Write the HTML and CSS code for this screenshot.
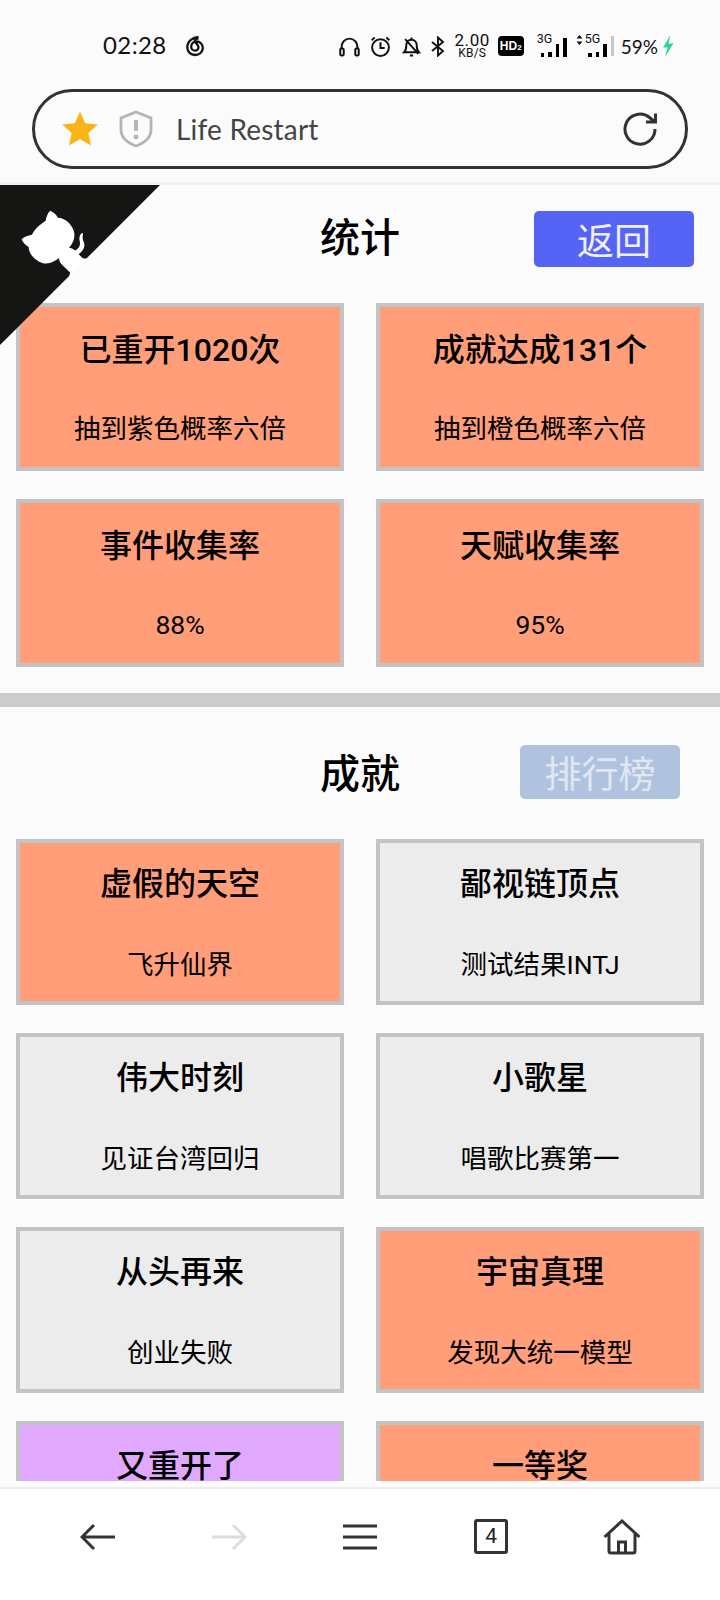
FILE: index.html
```html
<!DOCTYPE html>
<html lang="zh-CN">
<head>
    <meta charset="UTF-8" />
    <meta name="viewport" content="width=device-width, initial-scale=1" />
    <title>Life Restart</title>
    <link rel="stylesheet" href="styles.css">
</head>
<body>
    <div class="phone">
        <div class="status-bar">
            <div class="status-left">
                <span class="time">02:28</span>
                <svg class="ic-netease" viewBox="0 0 20 22"><path d="M13.500 1.800 C8 2.200 2.300 6 2.300 12.300 C2.300 17 5.800 20 10 20 C14.500 20 17.800 17 17.800 13 C17.800 9 14.800 6.500 11.500 6.500 C8.300 6.500 6.200 9 6.200 11.700 C6.200 14 8 15.700 10 15.700 C12 15.700 13.500 14.200 13.500 12.300 C13.500 9.500 10.300 8.500 9.800 6 C9.400 4 11 3.300 13.500 3.800" /></svg>
            </div>
            <div class="status-right">
                <svg class="ic" viewBox="0 0 20 20"><path d="M2.500 14 V10 A7.500 7.500 0 0 1 17.500 10 V14" /><rect x="1.200" y="12" width="3.300" height="6.500" rx="1.200" /><rect x="15.500" y="12" width="3.300" height="6.500" rx="1.200" /></svg>
                <svg class="ic" viewBox="0 0 20 20"><circle cx="10" cy="11" r="8" /><path d="M10 6 V11.500 H14 M1.500 4 L4.500 1.500 M18.500 4 L15.500 1.500" /></svg>
                <svg class="ic ic-bell" viewBox="0 0 20 20"><path d="M3 15.500 C5 13.500 5 11 5 9 C5 6 7 3.500 10 3.500 C13 3.500 15 6 15 9 C15 11 15 13.500 17 15.500 Z M8.500 18.500 H11.500 M10 1.500 V3.500 M4 3 L16.500 17" /></svg>
                <svg class="ic ic-bt" viewBox="0 0 16 20"><path d="M2 5.500 L13 14.500 L8 19 V1 L13 5.500 L2 14.500" /></svg>
                <div class="speed"><span>2.00</span><span class="speed-unit">KB/S</span></div>
                <div class="hd-badge">HD<small>2</small></div>
                <div class="signal">
                    <span class="net-label">3G</span>
                    <div class="bars"><i class="b1"></i><i class="b2"></i><i class="b3"></i><i class="b4"></i></div>
                </div>
                <div class="signal signal-5g">
                    <svg class="updown" viewBox="0 0 7 10"><path d="M3.500 0 L6.500 3.500 H0.500 Z M3.500 10 L0.500 6.500 H6.500 Z" /></svg>
                    <span class="net-label">5G</span>
                    <div class="bars"><i class="b1"></i><i class="b2"></i><i class="b3"></i></div>
                </div>
                <div class="sep"></div>
                <span class="battery">59%</span>
                <svg class="ic-bolt" viewBox="0 0 12 22"><path d="M8.500 0 L1 12.500 H5.500 L3 22 L11.500 8.500 H6.500 Z" /></svg>
            </div>
        </div>

        <div class="url-wrap">
            <div class="url-bar">
                <svg class="ic-star" viewBox="0 0 24 24"><path d="M12 1 L15.300 8.300 L23.300 9.200 L17.300 14.500 L19 22.400 L12 18.400 L5 22.400 L6.700 14.500 L0.700 9.200 L8.700 8.300 Z" /></svg>
                <svg class="ic-shield" viewBox="0 0 34 38"><path d="M17 2 L32 8 V20 C32 28 25 33 17 36 C9 33 2 28 2 20 V8 Z" /><path class="mark" d="M17 10 V21" /><circle cx="17" cy="27" r="2.400" /></svg>
                <span class="url-title">Life Restart</span>
                <svg class="ic-reload" viewBox="0 0 36 36"><path d="M32 18 A15 15 0 1 1 26.500 6.500 L32 11 M32.500 2.500 V11 H23" /></svg>
            </div>
        </div>

        <main class="content">
            <a class="gh-corner">
                <svg viewBox="0 0 250 250">
                    <path transform="translate(250,0) scale(-1,1)" fill="#151513" d="M0,0 L115,115 L130,115 L142,142 L250,250 L250,0 Z" />
                    <g transform="translate(250,0) scale(-1,1)" fill="#fff">
                        <path d="M128.300,109.000 C113.800,99.700 119.000,89.600 119.000,89.600 C122.000,82.700 120.500,78.600 120.500,78.600 C119.200,72.000 123.400,76.300 123.400,76.300 C127.300,80.900 125.500,87.300 125.500,87.300 C122.900,97.600 130.600,101.900 134.400,103.200" />
                        <path d="M115.000,115.000 C114.900,115.100 118.700,116.500 119.800,115.400 L133.700,101.600 C136.900,99.200 139.900,98.400 142.200,98.600 C133.800,88.000 127.500,74.400 143.800,58.000 C148.500,53.400 154.000,51.200 159.700,51.000 C160.300,49.400 163.200,43.600 171.400,40.100 C171.400,40.100 176.100,42.500 178.800,56.200 C183.100,58.600 187.200,61.800 190.900,65.400 C194.500,69.000 197.700,73.200 200.100,77.600 C213.800,80.200 216.300,84.900 216.300,84.900 C212.700,93.100 206.900,96.000 205.400,96.600 C205.100,102.400 203.000,107.800 198.300,112.500 C181.900,128.900 168.300,122.500 157.700,114.100 C157.900,116.900 156.700,120.900 152.700,124.900 L141.000,136.500 C139.800,137.700 141.600,141.900 141.800,141.800 Z" />
                    </g>
                </svg>
            </a>

            <section class="section section-stats">
                <div class="section-head">
                    <h2>统计</h2>
                    <button class="btn btn-back">返回</button>
                </div>
                <div class="cards">
                    <div class="card orange"><h3>已重开1020次</h3><p>抽到紫色概率六倍</p></div>
                    <div class="card orange"><h3>成就达成131个</h3><p>抽到橙色概率六倍</p></div>
                    <div class="card orange"><h3>事件收集率</h3><p>88%</p></div>
                    <div class="card orange"><h3>天赋收集率</h3><p>95%</p></div>
                </div>
            </section>

            <div class="divider"></div>

            <section class="section section-achv">
                <div class="section-head">
                    <h2>成就</h2>
                    <button class="btn btn-rank">排行榜</button>
                </div>
                <div class="cards">
                    <div class="card orange"><h3>虚假的天空</h3><p>飞升仙界</p></div>
                    <div class="card grey"><h3>鄙视链顶点</h3><p>测试结果INTJ</p></div>
                    <div class="card grey"><h3>伟大时刻</h3><p>见证台湾回归</p></div>
                    <div class="card grey"><h3>小歌星</h3><p>唱歌比赛第一</p></div>
                    <div class="card grey"><h3>从头再来</h3><p>创业失败</p></div>
                    <div class="card orange"><h3>宇宙真理</h3><p>发现大统一模型</p></div>
                    <div class="card purple"><h3>又重开了</h3></div>
                    <div class="card orange"><h3>一等奖</h3></div>
                </div>
            </section>
        </main>

        <nav class="bottom-nav">
            <div class="nav-item"><svg class="nav-ic" viewBox="0 0 36 28"><path d="M35 14 H2 M14 2 L2 14 L14 26" /></svg></div>
            <div class="nav-item"><svg class="nav-ic off" viewBox="0 0 36 28"><path d="M1 14 H34 M22 2 L34 14 L22 26" /></svg></div>
            <div class="nav-item"><svg class="nav-ic" viewBox="0 0 36 28"><path d="M1 3 H35 M1 14 H35 M1 25 H35" /></svg></div>
            <div class="nav-item"><div class="tab-count">4</div></div>
            <div class="nav-item"><svg class="nav-ic home" viewBox="0 0 38 36"><path d="M1.500 18 L19 2 L36.500 18 M6 14.500 V32 Q6 34 8 34 H30 Q32 34 32 32 V14.500 M15.500 34 V23 H22.500 V34" /></svg></div>
        </nav>
    </div>
</body>
</html>
```

FILE: styles.css
```css
* {
    box-sizing: border-box;
}
body {
    margin: 0;
    font-family: Roboto, "Noto Sans CJK SC", sans-serif;
    background: #fff;
    color: #000;
}
.phone {
    width: 720px;
    height: 1600px;
    display: flex;
    flex-direction: column;
    overflow: hidden;
    background: #fbfbfb;
}

/* status bar */
.status-bar {
    height: 89px;
    flex: none;
    display: flex;
    align-items: flex-start;
    justify-content: space-between;
    padding: 33px 46px 0 103px;
}
.status-left {
    display: flex;
    align-items: center;
    gap: 18px;
    height: 26px;
}
.time {
    font-family: Lato, sans-serif;
    font-size: 24px;
    letter-spacing: 0.4px;
    line-height: 24px;
    margin-top: -3px;
    color: #111;
}
.ic-netease {
    width: 20px;
    height: 22px;
    fill: none;
    stroke: #111;
    stroke-width: 2.300;
}
.status-right {
    display: flex;
    align-items: center;
    height: 26px;
}
.ic {
    width: 21px;
    height: 21px;
    fill: none;
    stroke: #111;
    stroke-width: 1.900;
    margin-right: 10px;
}
.ic rect {
    fill: #fff;
}
.ic-bell {
    margin-right: 8px;
}
.ic-bt {
    width: 16px;
    margin-right: 9px;
}
.speed {
    display: flex;
    flex-direction: column;
    align-items: center;
    width: 35px;
    font-family: Roboto, sans-serif;
    font-size: 17px;
    line-height: 14px;
    letter-spacing: 0.6px;
    color: #111;
    margin-right: 8px;
}
.speed-unit {
    font-size: 12px;
    line-height: 12px;
    letter-spacing: 0.2px;
}
.hd-badge {
    width: 26px;
    height: 20px;
    border-radius: 4px;
    background: #000;
    color: #fff;
    font-family: "Liberation Sans", sans-serif;
    font-weight: 700;
    font-size: 12px;
    line-height: 20px;
    text-align: center;
    margin-right: 13px;
}
.hd-badge small {
    font-size: 8px;
}
.signal {
    position: relative;
    width: 30px;
    height: 22px;
    margin-right: 9px;
}
.signal-5g {
    width: 31px;
    margin-right: 4px;
}
.signal-5g .net-label {
    left: 9px;
}
.net-label {
    position: absolute;
    left: 0;
    top: -2px;
    font-family: Roboto, sans-serif;
    font-size: 12.500px;
    line-height: 12px;
    color: #111;
}
.updown {
    position: absolute;
    left: 0;
    top: 0;
    width: 7px;
    height: 10px;
    fill: #111;
}
.bars {
    position: absolute;
    right: 0;
    bottom: 0;
    display: flex;
    align-items: flex-end;
    gap: 4px;
    height: 20px;
}
.bars i {
    display: block;
    width: 3.500px;
    background: #000;
}
.bars .b1 { height: 4px; }
.bars .b2 { height: 5px; }
.bars .b3 { height: 13px; }
.bars .b4 { height: 19px; }
.sep {
    width: 3px;
    height: 20px;
    background: #c8c8c8;
    margin-right: 7px;
}
.battery {
    font-family: Lato, sans-serif;
    font-size: 19px;
    color: #111;
    margin-right: 4px;
}
.ic-bolt {
    width: 12px;
    height: 22px;
    fill: #34d399;
}

/* url bar */
.url-wrap {
    height: 96px;
    flex: none;
    padding: 0 32px;
    border-bottom: 3px solid #f2f2f2;
}
.url-bar {
    height: 80px;
    display: flex;
    align-items: center;
    border: 3px solid #333;
    border-radius: 40px;
    padding: 0 26px 0 25px;
    background: #fbfbfb;
}
.ic-star {
    width: 40px;
    height: 38px;
    fill: #fbb516;
    margin-right: 19px;
}
.ic-shield {
    width: 34px;
    height: 38px;
    fill: none;
    stroke: #b5b5b5;
    stroke-width: 2.800;
    margin-right: 23px;
}
.ic-shield .mark {
    stroke-width: 4;
}
.ic-shield circle {
    fill: #b5b5b5;
    stroke: none;
}
.url-title {
    flex: 1;
    font-family: Lato, sans-serif;
    font-size: 28px;
    letter-spacing: 0.2px;
    color: #444;
}
.ic-reload {
    width: 36px;
    height: 36px;
    fill: none;
    stroke: #333;
    stroke-width: 3;
}

/* content */
.content {
    position: relative;
    flex: 1;
    min-height: 0;
    overflow: hidden;
}
.gh-corner {
    position: absolute;
    left: 0;
    top: 0;
    width: 160px;
    height: 160px;
    z-index: 2;
}
.gh-corner svg {
    display: block;
    width: 160px;
    height: 160px;
}
.section {
    padding: 0 16px;
}
.section-head {
    display: grid;
    grid-template-columns: 1fr auto 1fr;
    align-items: start;
}
.section-stats .section-head {
    padding-top: 26px;
    margin-bottom: 36px;
}
.section-achv .section-head {
    padding-top: 38px;
    margin-bottom: 34px;
}
h2 {
    grid-column: 2;
    margin: 0;
    font-size: 40px;
    font-weight: 500;
    line-height: 56px;
}
.section-achv h2 {
    line-height: 60px;
}
.btn {
    justify-self: end;
    width: 160px;
    height: 56px;
    border: none;
    border-radius: 5px;
    color: #eef0fb;
    font-family: Roboto, "Noto Sans CJK SC", sans-serif;
    font-size: 37px;
    font-weight: 400;
    padding: 0;
}
.btn-back {
    background: #5664f5;
    margin-right: 10px;
}
.btn-rank {
    height: 54px;
    background: #afc3de;
    color: #e0e7f1;
    margin-right: 24px;
}
.cards {
    display: grid;
    grid-template-columns: 328px 328px;
    justify-content: space-between;
}
.section-stats .cards {
    row-gap: 28px;
    padding-bottom: 26px;
}
.section-achv .cards {
    row-gap: 28px;
}
.card {
    height: 168px;
    border: 4px solid #c3c3c3;
    text-align: center;
    padding-top: 20px;
}
.section-achv .card {
    height: 166px;
    padding-top: 18px;
}
.card h3 {
    margin: 0;
    font-size: 32px;
    font-weight: 500;
    line-height: 46px;
}
.card p {
    margin: 37px 0 0;
    font-size: 26.500px;
    font-weight: 400;
    line-height: 38px;
}
.section-achv .card p {
    margin-top: 39px;
}
.orange {
    background: #ff9e79;
}
.grey {
    background: #ececec;
}
.purple {
    background: #e0a9ff;
}
.divider {
    height: 14px;
    background: #cccccc;
}

/* bottom nav */
.bottom-nav {
    height: 113px;
    flex: none;
    display: flex;
    padding: 0 32px 16px;
    background: #fff;
    border-top: 2px solid #eeeeee;
    margin-top: 6px;
}
.nav-item {
    flex: 1;
    display: flex;
    align-items: center;
    justify-content: center;
}
.nav-ic {
    width: 36px;
    height: 28px;
    fill: none;
    stroke: #333;
    stroke-width: 3;
}
.nav-ic.off {
    stroke: #dcdcdc;
}
.nav-ic.home {
    width: 38px;
    height: 36px;
}
.tab-count {
    width: 34px;
    height: 35px;
    border: 3px solid #333;
    border-radius: 3px;
    font-family: Roboto, sans-serif;
    font-size: 21px;
    line-height: 29px;
    text-align: center;
    color: #222;
}
```
